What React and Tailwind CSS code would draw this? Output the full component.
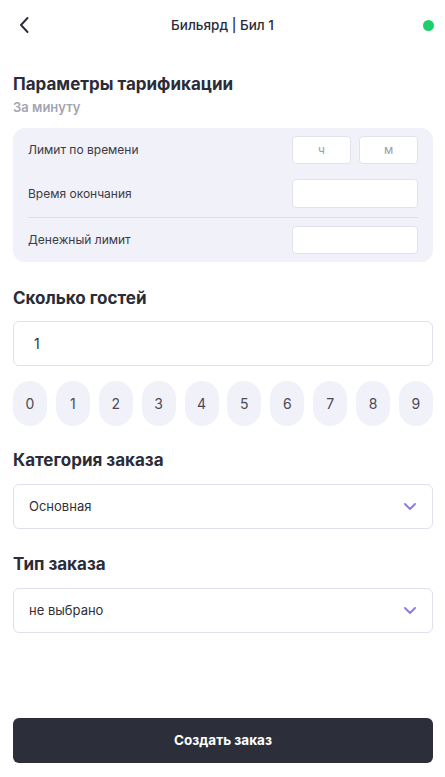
import React from "react";

function Chevron() {
  return (
    <svg width="12" height="7" viewBox="0 0 12 7" fill="none">
      <path d="M1 1l5 5 5-5" stroke="#8a78e6" strokeWidth="1.8" strokeLinecap="round" strokeLinejoin="round" />
    </svg>
  );
}

function Select({ value }) {
  return (
    <div className="h-[45px] rounded-[6px] border border-[#dfdfee] bg-white flex items-center justify-between pl-[15px] pr-[16px]">
      <span className="text-[13px] text-[#2f3039]">{value}</span>
      <Chevron />
    </div>
  );
}

export default function App() {
  const digits = [0, 1, 2, 3, 4, 5, 6, 7, 8, 9];
  return (
    <div className="min-h-screen h-[777px] bg-white flex flex-col text-[#2a2c37]" style={{ fontFamily: "Inter, 'Noto Sans', sans-serif" }}>
      <div className="h-[50px] flex items-center justify-between pl-[19px] pr-[11px] relative">
        <svg width="10" height="16" viewBox="0 0 10 16" fill="none">
          <path d="M8.5 1L2 8l6.5 7" stroke="#2a2c37" strokeWidth="1.9" strokeLinecap="round" strokeLinejoin="round" />
        </svg>
        <span className="absolute left-1/2 -translate-x-1/2 text-[13.5px] font-medium">Бильярд | Бил 1</span>
        <span className="w-[11px] h-[11px] rounded-full bg-[#1fce6c]" />
      </div>

      <div className="pl-[13px] pr-[12px] flex flex-col flex-1">
        <div className="mt-[22px] text-[17px] leading-[24px] font-bold">Параметры тарификации</div>
        <div className="mt-[2px] text-[13px] leading-[18px] font-semibold text-[#a4a4b4]">За минуту</div>

        <div className="mt-[12px] rounded-[12px] bg-[#f1f1f9] pt-[8px] pb-[8px] px-[15px] flex flex-col">
          <div className="h-[28px] flex items-center justify-between">
            <span className="text-[12px] text-[#3a3b45]">Лимит по времени</span>
            <div className="flex gap-[8px]">
              <div className="w-[59px] h-[28px] rounded-[4px] border border-[#e2e2ef] bg-white flex items-center justify-center text-[12px] text-[#9d9dab]">ч</div>
              <div className="w-[59px] h-[28px] rounded-[4px] border border-[#e2e2ef] bg-white flex items-center justify-center text-[12px] text-[#9d9dab]">м</div>
            </div>
          </div>
          <div className="mt-[15px] h-[29px] flex items-center justify-between">
            <span className="text-[12px] text-[#3a3b45]">Время окончания</span>
            <div className="w-[126px] h-[29px] rounded-[4px] border border-[#e2e2ef] bg-white" />
          </div>
          <div className="mt-[9px] h-px bg-[#dedeec]" />
          <div className="mt-[8px] h-[28px] flex items-center justify-between">
            <span className="text-[12px] text-[#3a3b45]">Денежный лимит</span>
            <div className="w-[126px] h-[28px] rounded-[4px] border border-[#e2e2ef] bg-white" />
          </div>
        </div>

        <div className="mt-[24px] text-[17px] leading-[24px] font-bold">Сколько гостей</div>
        <div className="mt-[11px] h-[45px] rounded-[6px] border border-[#dfdfee] bg-white flex items-center pl-[20px] text-[14px] text-[#2f3039]">1</div>

        <div className="mt-[15px] flex justify-between">
          {digits.map((d) => (
            <div key={d} className="w-[34px] h-[45px] rounded-full bg-[#f1f1f9] flex items-center justify-center text-[14px] text-[#4a4b55]">
              {d}
            </div>
          ))}
        </div>

        <div className="mt-[22px] text-[17px] leading-[24px] font-bold">Категория заказа</div>
        <div className="mt-[12px]"><Select value="Основная" /></div>

        <div className="mt-[23px] text-[17px] leading-[24px] font-bold">Тип заказа</div>
        <div className="mt-[12px]"><Select value="не выбрано" /></div>

        <div className="mt-auto pb-[14px]">
          <div className="h-[45px] rounded-[6px] bg-[#2c2f3a] flex items-center justify-center text-white text-[13.5px] font-bold">Создать заказ</div>
        </div>
      </div>
    </div>
  );
}
